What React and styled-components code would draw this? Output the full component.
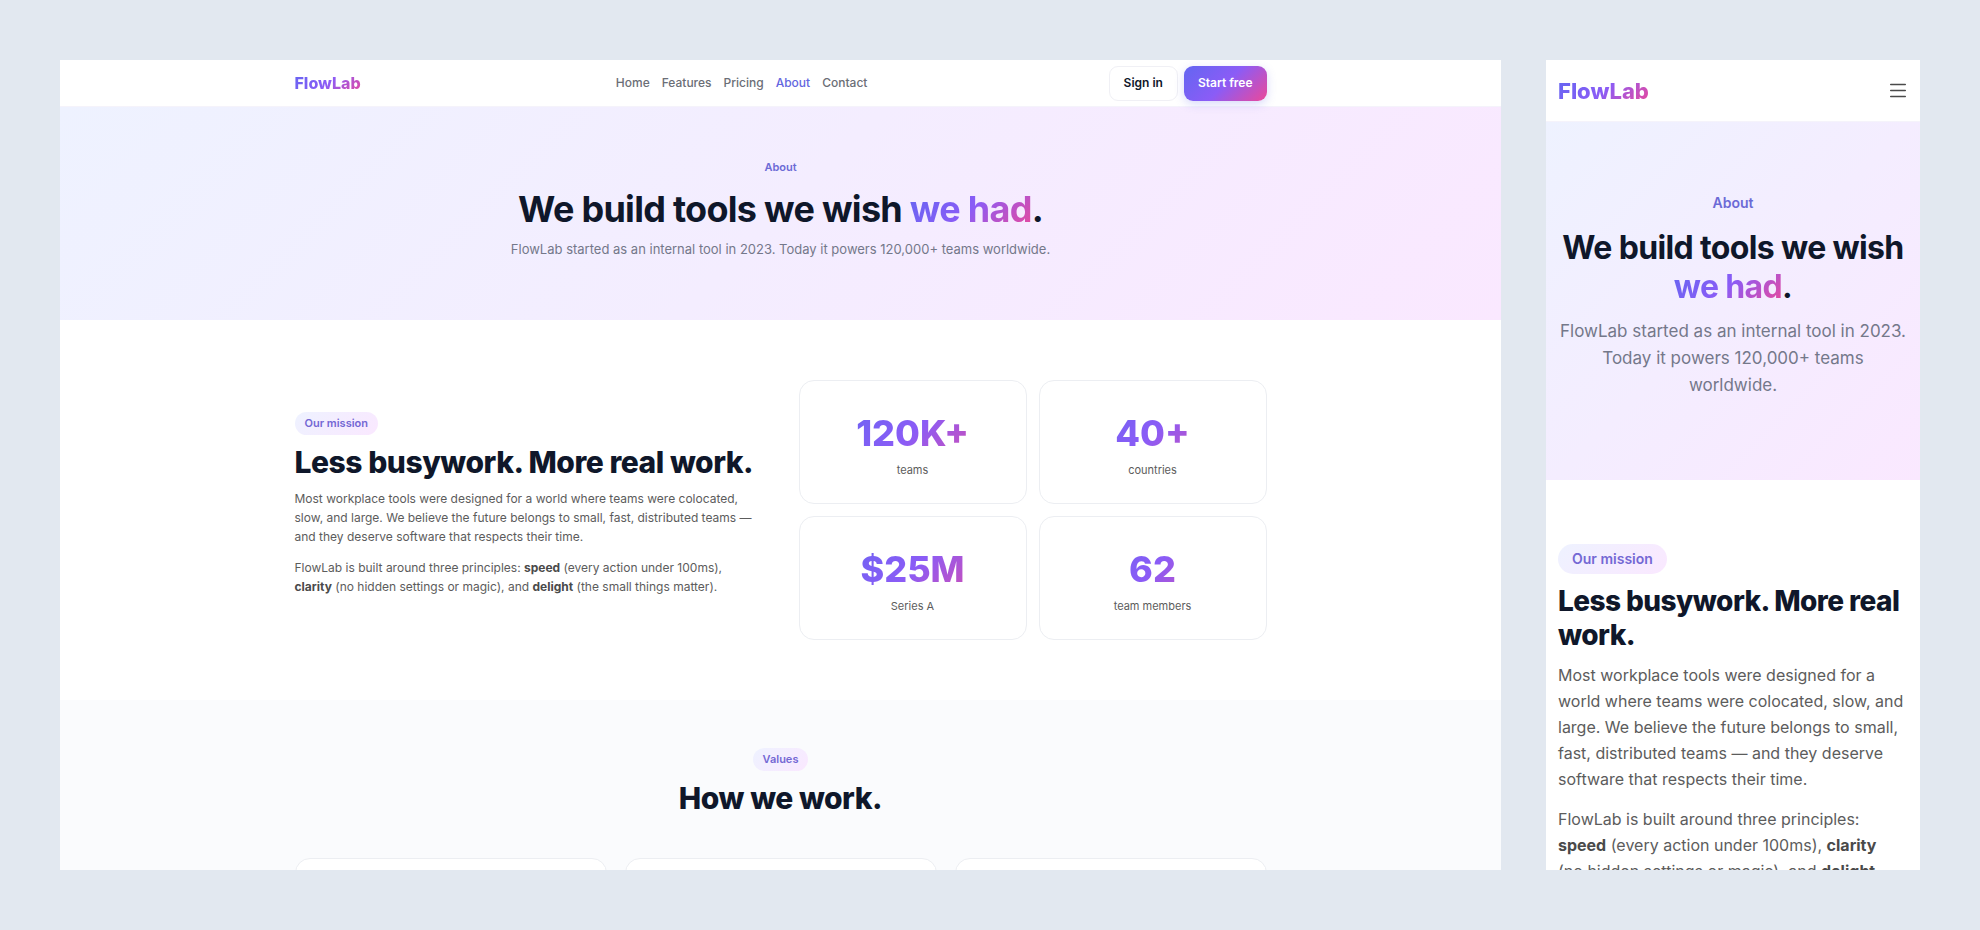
import React from "react";
import styled, { createGlobalStyle, css, ThemeProvider } from "styled-components";

const BRAND = "linear-gradient(135deg, #6366f1 0%, #8b5cf6 50%, #ec4899 100%)";
const SOFT = "linear-gradient(135deg, #eef2ff 0%, #fae8ff 100%)";

const desktop = {
  gutter: 12,
  nav: { height: 47, logo: 16 },
  hero: { padding: "48px 12px 60px", eyebrow: 11, eyebrowLine: 24, title: 36, titleLine: 40, gap: 10, text: 13, textLine: 21 },
  section: 60,
  badge: { size: 11, line: 23, pad: 10 },
  heading: { size: 30, line: 36, gap: 9, tracking: "-0.015em" },
  copy: { size: 12, line: 19, gap: 12 },
};

const mobile = {
  gutter: 12,
  nav: { height: 62, logo: 22 },
  hero: { padding: "68px 12px 81px", eyebrow: 14, eyebrowLine: 26, title: 32, titleLine: 39, gap: 12, text: 17, textLine: 27 },
  section: 64,
  badge: { size: 14, line: 30, pad: 14 },
  heading: { size: 28, line: 34, gap: 10, tracking: "-0.02em" },
  copy: { size: 16, line: 26, gap: 14 },
};

const GlobalStyle = createGlobalStyle`
  *, *::before, *::after { box-sizing: border-box; }
  body {
    margin: 0;
    background: #e2e8f0;
    color: #0f172a;
    font-family: Inter, "Liberation Sans", sans-serif;
  }
  h1, h2, p { margin: 0; }
  a { color: inherit; text-decoration: none; }
  button { font-family: inherit; cursor: pointer; }
`;

const Stage = styled.div`
  display: grid;
  grid-template-columns: minmax(0, 1441fr) minmax(0, 374fr);
  gap: 45px;
  height: 100vh;
  padding: 60px;
`;

const Screen = styled.div`
  min-height: 0;
  overflow: hidden;
  background: #ffffff;
`;

const gradientText = css`
  background: ${BRAND};
  background-clip: text;
  -webkit-background-clip: text;
  color: transparent;
`;

const Container = styled.div`
  width: 100%;
  max-width: ${({ theme }) => 972 + 2 * theme.gutter}px;
  margin: 0 auto;
  padding: 0 ${({ theme }) => theme.gutter}px;
`;

const NavBar = styled.header`
  height: ${({ theme }) => theme.nav.height}px;
  background: #ffffff;
  border-bottom: 1px solid #f5f3fb;
`;

const NavInner = styled(Container)`
  display: flex;
  align-items: center;
  justify-content: space-between;
  height: 100%;
`;

const Logo = styled.a`
  ${gradientText}
  margin-right: 14px;
  font-size: ${({ theme }) => theme.nav.logo}px;
  line-height: 28px;
  font-weight: 800;
`;

const NavLinks = styled.nav`
  display: flex;
  gap: 12px;
`;

const NavLink = styled.a`
  font-size: 12px;
  line-height: 20px;
  font-weight: 500;
  color: #6b6e76;

  &[aria-current="page"] {
    color: #6366e0;
  }
`;

const Actions = styled.div`
  display: flex;
  gap: 6px;
`;

const Button = styled.button`
  height: 35px;
  padding: 0 14px;
  border: ${({ $primary }) => ($primary ? "0" : "1px solid #f0f0f5")};
  border-radius: 9px;
  font-size: 12px;
  line-height: 18px;
  font-weight: 600;
  color: ${({ $primary }) => ($primary ? "#ffffff" : "#0f172a")};
  background: ${({ $primary }) => ($primary ? BRAND : "#ffffff")};
  box-shadow: ${({ $primary }) => ($primary ? "0 3px 10px rgba(99, 102, 241, 0.25)" : "none")};
`;

const MenuButton = styled.button`
  display: flex;
  padding: 2px;
  border: 0;
  background: none;
  color: #4a4a4a;
`;

const HeroBand = styled.section`
  padding: ${({ theme }) => theme.hero.padding};
  background: ${SOFT};
  text-align: center;
`;

const Eyebrow = styled.p`
  font-size: ${({ theme }) => theme.hero.eyebrow}px;
  line-height: ${({ theme }) => theme.hero.eyebrowLine}px;
  font-weight: 600;
  color: #6c6ad6;
`;

const Title = styled.h1`
  margin: ${({ theme }) => theme.hero.gap}px 0;
  font-size: ${({ theme }) => theme.hero.title}px;
  line-height: ${({ theme }) => theme.hero.titleLine}px;
  font-weight: 700;
  letter-spacing: -0.02em;
`;

const Accent = styled.span`
  ${gradientText}
`;

const Lead = styled.p`
  font-size: ${({ theme }) => theme.hero.text}px;
  line-height: ${({ theme }) => theme.hero.textLine}px;
  color: #74788a;
`;

const Section = styled.section`
  padding: ${({ theme }) => theme.section}px 0;
`;

const ValuesSection = styled.section`
  padding: 48px 0 60px;
  background: #fafbfd;
`;

const Split = styled(Container)`
  display: grid;
  grid-template-columns: repeat(2, minmax(0, 1fr));
  align-items: center;
  gap: 36px;
`;

const Badge = styled.span`
  display: block;
  width: fit-content;
  padding: 0 ${({ theme }) => theme.badge.pad}px;
  border-radius: 999px;
  background: ${SOFT};
  font-size: ${({ theme }) => theme.badge.size}px;
  line-height: ${({ theme }) => theme.badge.line}px;
  font-weight: 600;
  color: #7468d4;
`;

const Heading = styled.h2`
  margin: ${({ theme }) => theme.heading.gap}px 0;
  font-size: ${({ theme }) => theme.heading.size}px;
  line-height: ${({ theme }) => theme.heading.line}px;
  font-weight: 800;
  letter-spacing: ${({ theme }) => theme.heading.tracking};
`;

const Copy = styled.p`
  margin-bottom: ${({ theme }) => theme.copy.gap}px;
  font-size: ${({ theme }) => theme.copy.size}px;
  line-height: ${({ theme }) => theme.copy.line}px;
  color: #5c5c5c;

  strong {
    color: #4a4a4a;
  }
`;

const Stats = styled.div`
  display: grid;
  grid-template-columns: repeat(2, minmax(0, 1fr));
  gap: 12px;
`;

const Card = styled.div`
  padding: 24px;
  border: 1px solid #eceef2;
  border-radius: 15px;
  background: #ffffff;
`;

const StatCard = styled(Card)`
  text-align: center;
`;

const StatValue = styled.p`
  ${gradientText}
  font-size: 36px;
  line-height: 57px;
  font-weight: 800;
`;

const StatLabel = styled.p`
  font-size: 11px;
  line-height: 17px;
  color: #5c5c5c;
`;

const SectionHead = styled.div`
  display: flex;
  flex-direction: column;
  align-items: center;
  margin-bottom: 33px;
`;

const ValueGrid = styled.div`
  display: grid;
  grid-template-columns: repeat(3, minmax(0, 1fr));
  gap: 18px;
`;

const ValueCard = styled(Card)`
  min-height: 150px;
`;

const links = ["Home", "Features", "Pricing", "About", "Contact"];

const stats = [
  ["120K+", "teams"],
  ["40+", "countries"],
  ["$25M", "Series A"],
  ["62", "team members"],
];

function Hero() {
  return (
    <HeroBand>
      <Eyebrow>About</Eyebrow>
      <Title>
        We build tools we wish <Accent>we had</Accent>.
      </Title>
      <Lead>FlowLab started as an internal tool in 2023. Today it powers 120,000+ teams worldwide.</Lead>
    </HeroBand>
  );
}

function Mission() {
  return (
    <div>
      <Badge>Our mission</Badge>
      <Heading>Less busywork. More real work.</Heading>
      <Copy>
        Most workplace tools were designed for a world where teams were colocated, slow, and large. We
        believe the future belongs to small, fast, distributed teams — and they deserve software that
        respects their time.
      </Copy>
      <Copy>
        FlowLab is built around three principles: <strong>speed</strong> (every action under 100ms),{" "}
        <strong>clarity</strong> (no&nbsp;hidden settings or magic), and <strong>delight</strong>{" "}
        (the&nbsp;small things matter).
      </Copy>
    </div>
  );
}

function DesktopPage() {
  return (
    <Screen>
      <NavBar>
        <NavInner>
          <Logo href="#">FlowLab</Logo>
          <NavLinks aria-label="Main">
            {links.map((label) => (
              <NavLink key={label} href="#" aria-current={label === "About" ? "page" : undefined}>
                {label}
              </NavLink>
            ))}
          </NavLinks>
          <Actions>
            <Button type="button">Sign in</Button>
            <Button type="button" $primary>
              Start free
            </Button>
          </Actions>
        </NavInner>
      </NavBar>
      <Hero />
      <Section>
        <Split>
          <Mission />
          <Stats>
            {stats.map(([value, label]) => (
              <StatCard key={label}>
                <StatValue>{value}</StatValue>
                <StatLabel>{label}</StatLabel>
              </StatCard>
            ))}
          </Stats>
        </Split>
      </Section>
      <ValuesSection>
        <Container>
          <SectionHead>
            <Badge>Values</Badge>
            <Heading>How we work.</Heading>
          </SectionHead>
          <ValueGrid>
            <ValueCard />
            <ValueCard />
            <ValueCard />
          </ValueGrid>
        </Container>
      </ValuesSection>
    </Screen>
  );
}

function MobilePage() {
  return (
    <Screen>
      <NavBar>
        <NavInner>
          <Logo href="#">FlowLab</Logo>
          <MenuButton type="button" aria-label="Open menu">
            <svg width="16" height="16" viewBox="0 0 16 16" fill="none" stroke="currentColor" strokeWidth="1.3" strokeLinecap="round">
              <path d="M0.6 1.5h14.8M0.6 7.5h14.8M0.6 13.5h14.8" />
            </svg>
          </MenuButton>
        </NavInner>
      </NavBar>
      <Hero />
      <Section>
        <Container>
          <Mission />
        </Container>
      </Section>
    </Screen>
  );
}

export default function App() {
  return (
    <>
      <GlobalStyle />
      <Stage>
        <ThemeProvider theme={desktop}>
          <DesktopPage />
        </ThemeProvider>
        <ThemeProvider theme={mobile}>
          <MobilePage />
        </ThemeProvider>
      </Stage>
    </>
  );
}
